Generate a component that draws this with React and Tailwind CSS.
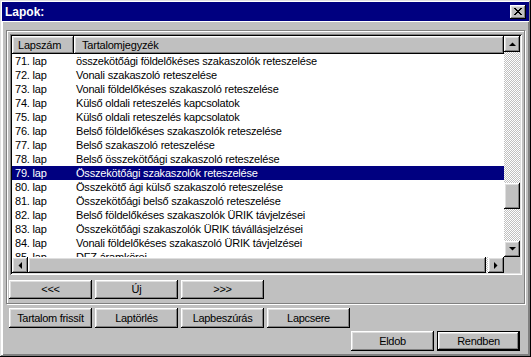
const raised =
  "shadow-[inset_-1px_-1px_#000,inset_1px_1px_#fff,inset_-2px_-2px_#808080,inset_2px_2px_#dfdfdf]";

const rows = [
  ["71. lap", "összekötőági földelőkéses szakaszolók reteszelése"],
  ["72. lap", "Vonali szakaszoló reteszelése"],
  ["73. lap", "Vonali földelőkéses szakaszoló reteszelése"],
  ["74. lap", "Külső oldali reteszelés kapcsolatok"],
  ["75. lap", "Külső oldali reteszelés kapcsolatok"],
  ["76. lap", "Belső földelőkéses szakaszolók reteszelése"],
  ["77. lap", "Belső szakaszoló reteszelése"],
  ["78. lap", "Belső összekötőági szakaszoló reteszelése"],
  ["79. lap", "Összekötőági szakaszolók reteszelése"],
  ["80. lap", "Összekötő ági külső szakaszoló reteszelése"],
  ["81. lap", "Összekötőági belső szakaszoló reteszelése"],
  ["82. lap", "Belső földelőkéses szakaszolók ÜRIK távjelzései"],
  ["83. lap", "Összekötőági szakaszolók ÜRIK távállásjelzései"],
  ["84. lap", "Vonali földelőkéses szakaszoló ÜRIK távjelzései"],
  ["85. lap", "DFZ áramkörei"],
];

const Arrow = ({ dir }) => {
  const pts = {
    up: "0,4 7,4 3.5,0.5",
    down: "0,0 7,0 3.5,3.5",
    left: "4,0 4,7 0.5,3.5",
    right: "0,0 0,7 3.5,3.5",
  }[dir];
  const vertical = dir === "up" || dir === "down";
  return (
    <svg width={vertical ? 7 : 4} height={vertical ? 4 : 7}>
      <polygon points={pts} fill="#000" />
    </svg>
  );
};

const ScrollBtn = ({ dir }) => (
  <div className={`w-[16px] h-[16px] shrink-0 bg-[#c0c0c0] flex items-center justify-center ${raised}`}>
    <Arrow dir={dir} />
  </div>
);

const CloseX = () => (
  <svg width="8" height="7" shapeRendering="crispEdges">
    <path d="M0 0h2v1H0zM6 0h2v1H6zM1 1h2v1H1zM5 1h2v1H5zM2 2h4v1H2zM3 3h2v1H3zM2 4h4v1H2zM1 5h2v1H1zM5 5h2v1H5zM0 6h2v1H0zM6 6h2v1H6z" fill="#000" />
  </svg>
);

const Btn = ({ children, isDefault }) =>
  isDefault ? (
    <div className="w-[83px] h-[20px] border border-black">
      <button className={`w-full h-full bg-[#c0c0c0] ${raised} tracking-[-0.3px]`}>{children}</button>
    </div>
  ) : (
    <button className={`w-[83px] h-full bg-[#c0c0c0] ${raised} tracking-[-0.3px]`}>{children}</button>
  );

const dither =
  "bg-[repeating-conic-gradient(#c0c0c0_0_25%,#fff_0_50%)] bg-[length:2px_2px]";

export default function App() {
  return (
    <div className="w-[531px] h-[357px] bg-[#c0c0c0] p-[2px] flex flex-col font-['Liberation_Sans',Arial,sans-serif] text-[11px] leading-none text-black shadow-[inset_-1px_-1px_#000,inset_1px_1px_#dfdfdf,inset_-2px_-2px_#808080,inset_2px_2px_#fff]">
      <div className="h-[19px] shrink-0 bg-[#000080] flex items-center justify-between pl-[3px] pr-[3px]">
        <span className="text-white font-bold text-[12px]">Lapok:</span>
        <div className={`w-[16px] h-[14px] bg-[#c0c0c0] flex items-center justify-center ${raised}`}>
          <CloseX />
        </div>
      </div>

      <div className="flex-1 flex flex-col px-[4px] pt-[9px] shadow-[inset_1px_1px_#fff,inset_-1px_-1px_#808080]">
        <div className="h-[274px] shrink-0 border border-[#808080] shadow-[inset_1px_1px_#fff,1px_1px_#fff] pt-[3px] pl-[2px] flex flex-col">
          <div className="ml-[1px] w-[512px] h-[241px] p-[2px] bg-white shadow-[inset_1px_1px_#808080,inset_-1px_-1px_#fff,inset_2px_2px_#000,inset_-2px_-2px_#dfdfdf] flex flex-col">
            <div className="flex flex-1 min-h-0">
              <div className="flex-1 flex flex-col min-w-0 tracking-[-0.2px]">
                <div className="h-[18px] flex shrink-0 bg-[#c0c0c0]">
                  <div className={`w-[62px] flex items-center pl-[6px] ${raised}`}>Lapszám</div>
                  <div className={`flex-1 flex items-center pl-[8px] ${raised}`}>Tartalomjegyzék</div>
                </div>
                <div className="flex-1 overflow-hidden">
                  {rows.map(([n, t], i) => (
                    <div
                      key={n}
                      className={`h-[14px] flex items-center whitespace-nowrap ${i === 8 ? "bg-[#000080] text-white" : ""}`}
                    >
                      <span className="w-[61px] pl-[3px] shrink-0">{n}</span>
                      <span className="pl-[3px]">{t}</span>
                    </div>
                  ))}
                </div>
              </div>
              <div className={`w-[16px] flex flex-col ${dither}`}>
                <ScrollBtn dir="up" />
                <div className="flex-1 relative">
                  <div className={`absolute left-0 top-[131px] w-[16px] h-[26px] bg-[#c0c0c0] ${raised}`} />
                </div>
                <ScrollBtn dir="down" />
              </div>
            </div>
            <div className="h-[16px] flex shrink-0">
              <div className={`flex-1 flex ${dither}`}>
                <ScrollBtn dir="left" />
                <div className={`flex-1 bg-[#c0c0c0] mr-[2px] ${raised}`} />
                <ScrollBtn dir="right" />
              </div>
              <div className="w-[16px] bg-[#c0c0c0]" />
            </div>
          </div>

          <div className="flex gap-[3px] h-[19px] mt-[5px]">
            <Btn>&lt;&lt;&lt;</Btn>
            <Btn>Új</Btn>
            <Btn>&gt;&gt;&gt;</Btn>
          </div>
        </div>

        <div className="flex gap-[3px] h-[20px] mt-[4px] pl-[3px]">
          <Btn>Tartalom frissít</Btn>
          <Btn>Laptörlés</Btn>
          <Btn>Lapbeszúrás</Btn>
          <Btn>Lapcsere</Btn>
        </div>

        <div className="flex justify-end gap-[3px] h-[20px] mt-[3px] pr-[5px]">
          <Btn>Eldob</Btn>
          <Btn isDefault>Rendben</Btn>
        </div>
      </div>
    </div>
  );
}
